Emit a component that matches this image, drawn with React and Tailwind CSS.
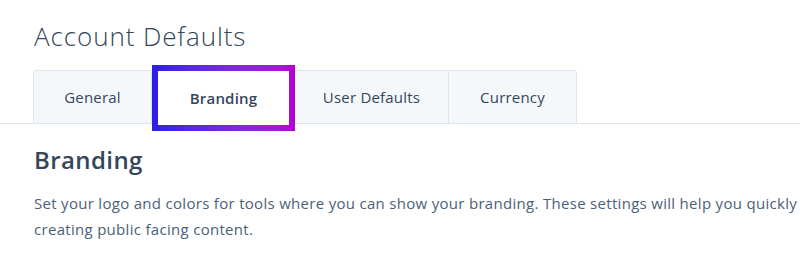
import React from 'react';

const tabs = [
  { label: 'General', w: 'w-[119px]' },
  { label: 'Branding', w: 'w-[143px]' },
  { label: 'User Defaults', w: 'w-[154px]' },
  { label: 'Currency', w: 'w-[128px]' },
];

export default function App() {
  const active = 'Branding';

  return (
    <div className="w-[800px] h-[256px] overflow-hidden bg-white text-[#33475b] font-['Open_Sans',sans-serif]">
      <div className="pl-[34px] pt-[20px]">
        <h1 className="text-[26px] leading-[32px] font-light tracking-[0.9px]">Account Defaults</h1>
      </div>

      <div className="mt-[18px] flex border-b border-[#dfe3eb] pl-[33px]">
        {tabs.map((tab, i) => {
          const isActive = tab.label === active;
          return (
            <div
              key={tab.label}
              className={cn(
                'relative h-[54px] flex items-center justify-center text-[15px] tracking-[0.2px] -mb-px',
                tab.w,
                isActive ? 'bg-white' : 'bg-[#f5f8fa] border border-[#dfe3eb]',
                i === 0 && 'rounded-tl-[3px]',
                i === tabs.length - 1 && 'rounded-tr-[3px]',
                i > 1 && 'border-l-0'
              )}
            >
              {isActive ? (
                <div className="absolute left-0 right-0 -top-[5px] -bottom-[7px] p-[6px] bg-gradient-to-r from-[#2a1ee6] to-[#b400d2]">
                  <div className="w-full h-full bg-white flex items-center justify-center font-semibold">
                    {tab.label}
                  </div>
                </div>
              ) : (
                <span>{tab.label}</span>
              )}
            </div>
          );
        })}
      </div>

      <div className="pl-[34px] pt-[20px]">
        <h2 className="text-[24px] leading-[32px] font-semibold tracking-[0.4px]">Branding</h2>
        <div className="mt-[14px] text-[15px] leading-[26px] tracking-[0.3px] text-[#4b5f78] whitespace-nowrap">
          <p>Set your logo and colors for tools where you can show your branding. These settings will help you quickly</p>
          <p>creating public facing content.</p>
        </div>
      </div>
    </div>
  );
}

function cn(...inputs) {
  return inputs.filter(Boolean).join(' ');
}
